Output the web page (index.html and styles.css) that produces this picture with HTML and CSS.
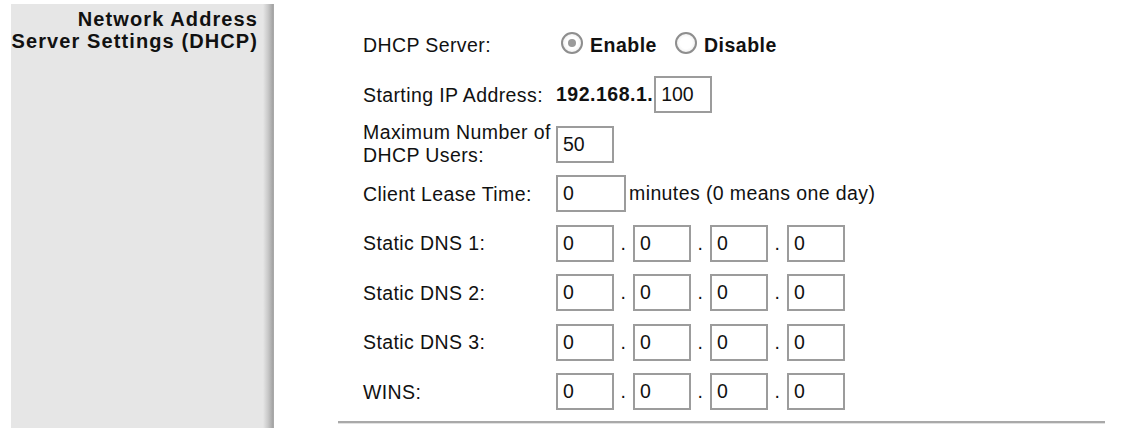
FILE: index.html
```html
<!DOCTYPE html>
<html>
<head>
<meta charset="utf-8">
<link rel="stylesheet" href="styles.css">
</head>
<body>
<div class="page">
  <aside class="sidebar">
    <h2 class="section-title">Network Address<br>Server Settings (DHCP)</h2>
  </aside>
  <main class="content">
    <div class="form">
      <div class="label">DHCP Server:</div>
      <div class="control radios">
        <span class="radio checked"></span><span class="radio-text">Enable</span>
        <span class="radio"></span><span class="radio-text">Disable</span>
      </div>

      <div class="label">Starting IP Address:</div>
      <div class="control baseline">
        <span class="prefix">192.168.1.</span><input class="field w3" type="text" value="100">
      </div>

      <div class="label two-line">Maximum Number of<br>DHCP Users:</div>
      <div class="control">
        <input class="field w3" type="text" value="50">
      </div>

      <div class="label">Client Lease Time:</div>
      <div class="control baseline">
        <input class="field w4" type="text" value="0"><span class="note">minutes (0 means one day)</span>
      </div>

      <div class="label">Static DNS 1:</div>
      <div class="control baseline ip">
        <input class="field w3" type="text" value="0"><span class="dot">.</span><input class="field w3" type="text" value="0"><span class="dot">.</span><input class="field w3" type="text" value="0"><span class="dot">.</span><input class="field w3" type="text" value="0">
      </div>

      <div class="label">Static DNS 2:</div>
      <div class="control baseline ip">
        <input class="field w3" type="text" value="0"><span class="dot">.</span><input class="field w3" type="text" value="0"><span class="dot">.</span><input class="field w3" type="text" value="0"><span class="dot">.</span><input class="field w3" type="text" value="0">
      </div>

      <div class="label">Static DNS 3:</div>
      <div class="control baseline ip">
        <input class="field w3" type="text" value="0"><span class="dot">.</span><input class="field w3" type="text" value="0"><span class="dot">.</span><input class="field w3" type="text" value="0"><span class="dot">.</span><input class="field w3" type="text" value="0">
      </div>

      <div class="label">WINS:</div>
      <div class="control baseline ip">
        <input class="field w3" type="text" value="0"><span class="dot">.</span><input class="field w3" type="text" value="0"><span class="dot">.</span><input class="field w3" type="text" value="0"><span class="dot">.</span><input class="field w3" type="text" value="0">
      </div>
    </div>
    <div class="rule"></div>
  </main>
</div>
</body>
</html>
```

FILE: styles.css
```css
html, body {
  margin: 0;
  padding: 0;
  background: #ffffff;
}

body {
  font-family: "Liberation Sans", Arial, sans-serif;
  color: #111;
}

.page {
  display: flex;
  align-items: flex-start;
  padding: 4px 0 0 11px;
}

.sidebar {
  width: 263px;
  height: 424px;
  flex: none;
  box-sizing: border-box;
  padding: 4px 16px 0 0;
  background: linear-gradient(to right, #e6e6e6 0, #e6e6e6 252px, #c9c9c9 257px, #a2a2a2 262px, #b0b0b0 263px);
}

.section-title {
  margin: 0;
  text-align: right;
  font-size: 20px;
  line-height: 22px;
  font-weight: bold;
  letter-spacing: 1.1px;
  color: #111;
}

.content {
  margin-left: 64px;
  width: 767px;
  flex: none;
}

.form {
  display: grid;
  grid-template-columns: 193px auto;
  grid-auto-rows: 49.5px;
  align-items: center;
  padding: 16.5px 0 0 25px;
  font-size: 19.5px;
  letter-spacing: 0.4px;
}

.label {
  white-space: nowrap;
  line-height: 24px;
}

.label.two-line {
  line-height: 23px;
}

.control {
  display: flex;
  align-items: center;
}

.control.baseline {
  align-items: baseline;
}

.radios {
  padding-left: 5px;
}

.radio {
  width: 22px;
  height: 22px;
  box-sizing: border-box;
  border: 2px solid #8e8e8e;
  border-radius: 50%;
  background: radial-gradient(circle at 50% 50%, #ffffff 0, #ffffff 45%, #e4e4e4 100%);
  position: relative;
  flex: none;
  margin-top: -4px;
}

.radio.checked::after {
  content: "";
  position: absolute;
  left: 50%;
  top: 50%;
  width: 8px;
  height: 8px;
  margin: -4px 0 0 -4px;
  border-radius: 50%;
  background: #9a9a9a;
}

.radio-text {
  font-weight: bold;
  margin: 0 18px 0 7px;
  letter-spacing: 0.5px;
}

.prefix {
  font-weight: bold;
  letter-spacing: 0.5px;
  margin-right: 1px;
}

.field {
  height: 37px;
  box-sizing: border-box;
  border: 2px solid #9c9c9c;
  border-radius: 0;
  background: #fff;
  padding: 0 0 0 5px;
  margin: 0;
  font-family: "Liberation Sans", Arial, sans-serif;
  font-size: 19.5px;
  color: #111;
  outline: none;
}

.field.w3 {
  width: 58px;
}

.field.w4 {
  width: 70px;
}

.note {
  margin-left: 3px;
}

.dot {
  width: 19px;
  text-align: center;
  flex: none;
}

.rule {
  margin-top: 4.5px;
  height: 2px;
  background: #a9a9a9;
  border-bottom: 1px solid #e2e2e2;
}
```
